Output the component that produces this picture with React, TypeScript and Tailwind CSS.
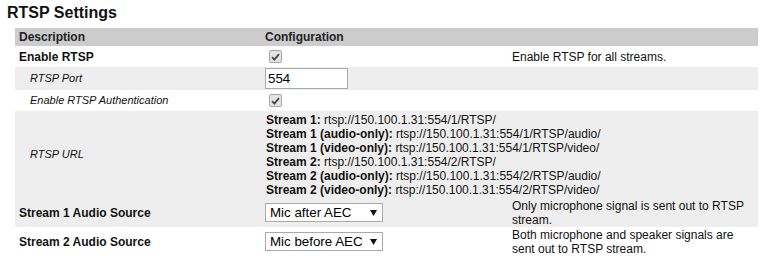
import React from 'react'

const font = { fontFamily: '"Liberation Sans", Arial, sans-serif' }

function Check() {
  return (
    <span className="ml-[4px] inline-flex h-[13px] w-[13px] items-center justify-center rounded-[2px] border border-[#a6a6a6] bg-[#e4e4e4]">
      <svg width="9" height="8" viewBox="0 0 9 8">
        <path d="M1 4.2 L3.4 6.6 L8 1.2" fill="none" stroke="#4a4a4a" strokeWidth="1.8" />
      </svg>
    </span>
  )
}

function Select({ value }: { value: string }) {
  return (
    <div className="relative h-[19px] w-[118px] border border-[#a9a9a9] bg-white pl-[4px] text-[13.33px] leading-[17px] text-black">
      {value}
      <svg className="absolute right-[5px] top-[6px]" width="7" height="6" viewBox="0 0 7 6">
        <path d="M0 0 H7 L3.5 6 Z" fill="#111" />
      </svg>
    </div>
  )
}

const urls = [
  ['Stream 1:', 'rtsp://150.100.1.31:554/1/RTSP/'],
  ['Stream 1 (audio-only):', 'rtsp://150.100.1.31:554/1/RTSP/audio/'],
  ['Stream 1 (video-only):', 'rtsp://150.100.1.31:554/1/RTSP/video/'],
  ['Stream 2:', 'rtsp://150.100.1.31:554/2/RTSP/'],
  ['Stream 2 (audio-only):', 'rtsp://150.100.1.31:554/2/RTSP/audio/'],
  ['Stream 2 (video-only):', 'rtsp://150.100.1.31:554/2/RTSP/video/'],
]

const row = 'grid grid-cols-[246px_247px_250px] items-center'

export default function App() {
  return (
    <div className="h-[277px] w-[782px] bg-white text-[12px] text-[#111]" style={font}>
      <h1 className="pl-[7px] pt-[3px] text-[16px] font-bold leading-[19px] text-[#111]">RTSP Settings</h1>

      <div className="ml-[15px] mt-[6px] w-[743px]">
        {/* header */}
        <div className={`${row} h-[18px] bg-[#cccccc] font-bold text-[#222]`}>
          <div className="pl-[4px]">Description</div>
          <div className="pl-[4px]">Configuration</div>
          <div />
        </div>

        <div className={`${row} h-[21px] bg-white`}>
          <div className="pl-[4px] font-bold">Enable RTSP</div>
          <div className="flex pl-[4px]"><Check /></div>
          <div className="pl-[4px]">Enable RTSP for all streams.</div>
        </div>

        <div className={`${row} h-[23px] bg-[#eeeeee]`}>
          <div className="pl-[15px] text-[11px] italic">RTSP Port</div>
          <div className="pl-[4px]">
            <div className="h-[21px] w-[83px] border border-[#a9a9a9] bg-white pl-[2px] text-[13.33px] leading-[19px] text-black">554</div>
          </div>
          <div />
        </div>

        <div className={`${row} h-[21px] bg-white`}>
          <div className="pl-[15px] text-[11px] italic">Enable RTSP Authentication</div>
          <div className="flex pl-[4px]"><Check /></div>
          <div />
        </div>

        <div className={`${row} h-[87px] bg-[#eeeeee]`}>
          <div className="pl-[15px] text-[11px] italic">RTSP URL</div>
          <div className="col-span-2 pl-[5px] leading-[14px]">
            {urls.map(([k, v]) => (
              <div key={k}>
                <span className="font-bold">{k}</span> {v}
              </div>
            ))}
          </div>
        </div>

        <div className={`${row} h-[29px] bg-[#eeeeee]`}>
          <div className="pl-[4px] font-bold">Stream 1 Audio Source</div>
          <div className="pl-[4px]"><Select value="Mic after AEC" /></div>
          <div className="pl-[4px] leading-[14px]">Only microphone signal is sent out to RTSP stream.</div>
        </div>

        <div className={`${row} h-[29px] bg-white`}>
          <div className="pl-[4px] font-bold">Stream 2 Audio Source</div>
          <div className="pl-[4px]"><Select value="Mic before AEC" /></div>
          <div className="pl-[4px] leading-[14px]">Both microphone and speaker signals are sent out to RTSP stream.</div>
        </div>
      </div>
    </div>
  )
}
